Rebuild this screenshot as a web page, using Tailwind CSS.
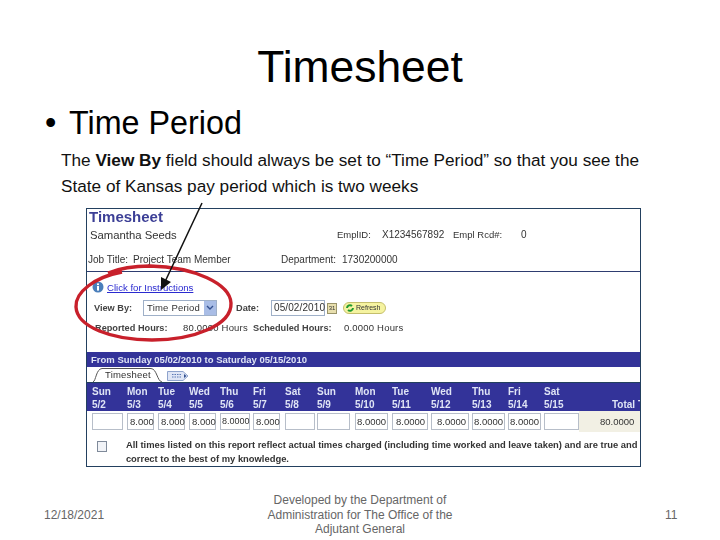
<!DOCTYPE html>
<html>
<head>
<meta charset="utf-8">
<script src="https://cdn.jsdelivr.net/npm/@tailwindcss/browser@4"></script>
</head>
<body class="bg-white">
<div class="relative w-[720px] h-[540px] overflow-hidden bg-white font-['Liberation_Sans',Arial,sans-serif] text-black">
  <h1 class="pt-[42px] h-[101px] text-center text-[44.4px] leading-[50px] font-normal">Timesheet</h1>
  <div class="flex h-[43px] pl-[45px] text-[32.3px] leading-[44px]"><span class="w-[24px]">•</span><span>Time Period</span></div>
  <div class="h-[64px] pt-[3px] pl-[61px] text-[17.2px] leading-[26px] text-[#111]">
    <p>The <b>View By</b> field should always be set to “Time Period” so that you see the</p>
    <p>State of Kansas pay period which is two weeks</p>
  </div>
  <section class="flex flex-col ml-[86px] w-[555px] h-[259px] border border-[#23405f] overflow-hidden text-[10px] leading-[12px] text-[#333] blur-[0.4px]">
    <div class="h-[17px] pl-[2px] pt-[1px] text-[15px] leading-[14px] font-bold text-[#3c3f96]">Timesheet</div>
    <div class="flex h-[25px] pt-[2px] text-[11.3px] leading-[14px]">
      <span class="w-[250px] pl-[3px]">Samantha Seeds</span>
      <span class="w-[45px] text-[9.5px]">EmplID:</span>
      <span class="w-[71px] text-[10px]">X1234567892</span>
      <span class="w-[68px] text-[9.5px]">Empl Rcd#:</span>
      <span class="text-[10px]">0</span>
    </div>
    <div class="flex h-[21px] pt-[2px] text-[10px] leading-[14px] border-b border-[#2e3d70]">
      <span class="w-[46px] pl-[1px]">Job Title:</span>
      <span class="w-[148px]">Project Team Member</span>
      <span class="w-[61px]">Department:</span>
      <span>1730200000</span>
    </div>
    <div class="flex items-center h-[24px] pl-[5px] pt-[8px] gap-[1px]">
      <svg class="w-[12px] h-[12px] -mt-[3px]" viewBox="0 0 12 12"><circle cx="6" cy="6" r="5.5" fill="#4a7ebb"/><rect x="5" y="5" width="2" height="4.6" fill="#fff"/><rect x="5" y="2.4" width="2" height="1.7" fill="#fff"/></svg>
      <a class="pl-[2px] text-[9.6px] text-[#2a2ad0] underline">Click for Instructions</a>
    </div>
    <div class="flex items-center h-[20px] pt-[4px] text-[9.2px]">
      <b class="w-[56px] pl-[7px] text-[#444]">View By:</b>
      <span class="flex items-center justify-between w-[74px] h-[16px] pl-[3px] border border-[#9fb0c8] text-[9.5px] tracking-[0.2px]">Time Period<span class="flex items-center justify-center w-[12px] h-[14px] bg-[#a9bde6]"><svg class="w-[8px] h-[6px]" viewBox="0 0 8 6"><path d="M1 1l3 3 3-3" fill="none" stroke="#33508f" stroke-width="1.4"/></svg></span></span>
      <b class="w-[35px] ml-[19px] text-[#444]">Date:</b>
      <span class="w-[54px] h-[16px] pl-[2px] border border-[#9fb0c8] text-[10px] leading-[14px] tracking-[0.1px]">05/02/2010</span>
      <span class="flex items-center justify-center w-[10px] h-[11px] ml-[2px] bg-[#e8dfae] border border-[#9a946a] text-[6px] leading-[6px]">31</span>
      <span class="flex items-center gap-[2px] w-[43px] h-[12px] ml-[6px] pl-[2px] bg-[#f5f3a0] border border-[#c4be6c] rounded-full text-[7px]"><svg class="w-[8px] h-[8px]" viewBox="0 0 8 8"><path d="M1 4a3 3 0 0 1 5-2M7 4a3 3 0 0 1-5 2" fill="none" stroke="#1f9a2f" stroke-width="2"/></svg>Refresh</span>
    </div>
    <div class="flex h-[36px] pt-[6px] text-[9.2px]">
      <b class="w-[96px] pl-[8px] text-[#444]">Reported Hours:</b>
      <span class="w-[70px] text-[9.5px] tracking-[0.2px]">80.0000 Hours</span>
      <b class="w-[91px] text-[#444]">Scheduled Hours:</b>
      <span class="text-[9.5px] tracking-[0.2px]">0.0000 Hours</span>
    </div>
    <div class="h-[15px] pl-[4px] bg-[#333399] text-[9.5px] leading-[15px] font-bold text-[#dfe4f5]">From Sunday 05/02/2010 to Saturday 05/15/2010</div>
    <div class="flex items-end h-[16px] border-b border-[#23405f] pl-[6px]">
      <span class="relative w-[69px] h-[14px] pl-[12px] text-[9.5px] leading-[14px] tracking-[0.2px]">Timesheet
        <svg class="absolute left-0 top-0 w-[69px] h-[14px]" viewBox="0 0 69 14" fill="none"><path d="M0 14C3 13 3 1 9 .5H58C64 1 64 13 69 14" stroke="#555"/></svg>
      </span>
      <svg class="w-[22px] h-[10px] ml-[5px] mb-[1px]" viewBox="0 0 22 10"><path d="M.5.5H16L21 5 16 9.5H.5Z" fill="#dfe6f6" stroke="#8ea3cc"/><path d="M5 3.5h9M5 6h9" stroke="#5a78b5" stroke-dasharray="1.5 1"/><path d="M17 3l2.5 2L17 7Z" fill="#33508f"/></svg>
    </div>
    <div class="grid grid-cols-[5px_35px_31px_31px_31px_33px_32px_32px_38px_37px_39px_41px_36px_36px_35px_1fr] h-[28px] pt-[3px] bg-[#333399] text-[10px] leading-[12.5px] font-bold text-[#dfe4f5]">
      <span></span>
      <span>Sun<br>5/2</span><span>Mon<br>5/3</span><span>Tue<br>5/4</span><span>Wed<br>5/5</span><span>Thu<br>5/6</span><span>Fri<br>5/7</span><span>Sat<br>5/8</span><span>Sun<br>5/9</span><span>Mon<br>5/10</span><span>Tue<br>5/11</span><span>Wed<br>5/12</span><span>Thu<br>5/13</span><span>Fri<br>5/14</span><span>Sat<br>5/15</span>
      <span class="whitespace-nowrap pt-[12.5px] pl-[33px]">Total T</span>
    </div>
    <div class="grid grid-cols-[5px_35px_31px_31px_31px_33px_32px_32px_38px_37px_39px_41px_36px_36px_35px_1fr] h-[21px] pt-[2px] text-[9.5px] leading-[15px]">
      <span></span>
      <span class="w-[31px] h-[17px] border border-[#b7bec9]"></span>
      <span class="w-[27px] h-[17px] pl-[2px] border border-[#b7bec9]">8.000</span>
      <span class="w-[27px] h-[17px] pl-[2px] border border-[#b7bec9]">8.000</span>
      <span class="w-[27px] h-[17px] pl-[2px] border border-[#b7bec9]">8.000</span>
      <span class="w-[30px] h-[17px] pl-[1px] border border-[#b7bec9] text-[9px]">8.0000</span>
      <span class="w-[27px] h-[17px] pl-[2px] border border-[#b7bec9]">8.000</span>
      <span class="w-[30px] h-[17px] border border-[#b7bec9]"></span>
      <span class="w-[33px] h-[17px] border border-[#b7bec9]"></span>
      <span class="w-[33px] h-[17px] pl-[1px] border border-[#b7bec9]">8.0000</span>
      <span class="w-[36px] h-[17px] pl-[3px] border border-[#b7bec9]">8.0000</span>
      <span class="w-[38px] h-[17px] pl-[5px] border border-[#b7bec9]">8.0000</span>
      <span class="w-[33px] h-[17px] pl-[1px] border border-[#b7bec9]">8.0000</span>
      <span class="w-[33px] h-[17px] pl-[1px] border border-[#b7bec9]">8.0000</span>
      <span class="w-[35px] h-[17px] border border-[#b7bec9]"></span>
      <span class="-mt-[2px] h-[21px] pl-[21px] leading-[21px] bg-[#f2f0e4] whitespace-nowrap">80.0000</span>
    </div>
    <div class="flex pt-[6px] text-[9.4px] leading-[14px] font-bold text-[#333]">
      <span class="w-[10px] h-[11px] mt-[3px] ml-[10px] bg-[#f1f3f7] border border-[#7f8a9a]"></span>
      <p class="ml-[19px] w-[520px] whitespace-nowrap">All times listed on this report reflect actual times charged (including time worked and leave taken) and are true and<br>correct to the best of my knowledge.</p>
    </div>
  </section>
  <footer class="grid grid-cols-[44px_198px_236px_187px_1fr] items-center h-[73px] pt-[23px] text-[12px] leading-[14.5px] text-[#666]">
    <span></span>
    <span>12/18/2021</span>
    <span class="text-center">Developed by the Department of<br>Administration for The Office of the<br>Adjutant General</span>
    <span></span>
    <span>11</span>
  </footer>
  <svg class="absolute left-0 top-0 w-[720px] h-[540px] pointer-events-none" viewBox="0 0 720 540" fill="none">
    <path d="M122 272C95 277 75 292 76 307C77 327 112 340 152 340C194 340 232 325 231 303C230 284 195 267 150 266C135 266 118 269 108 273" stroke="#c8202b" stroke-width="3.4"/>
    <path d="M202 203L163 286" stroke="#111" stroke-width="1.5"/>
    <path d="M161 290L161 277L171 282Z" fill="#111"/>
  </svg>
</div>
</body>
</html>
